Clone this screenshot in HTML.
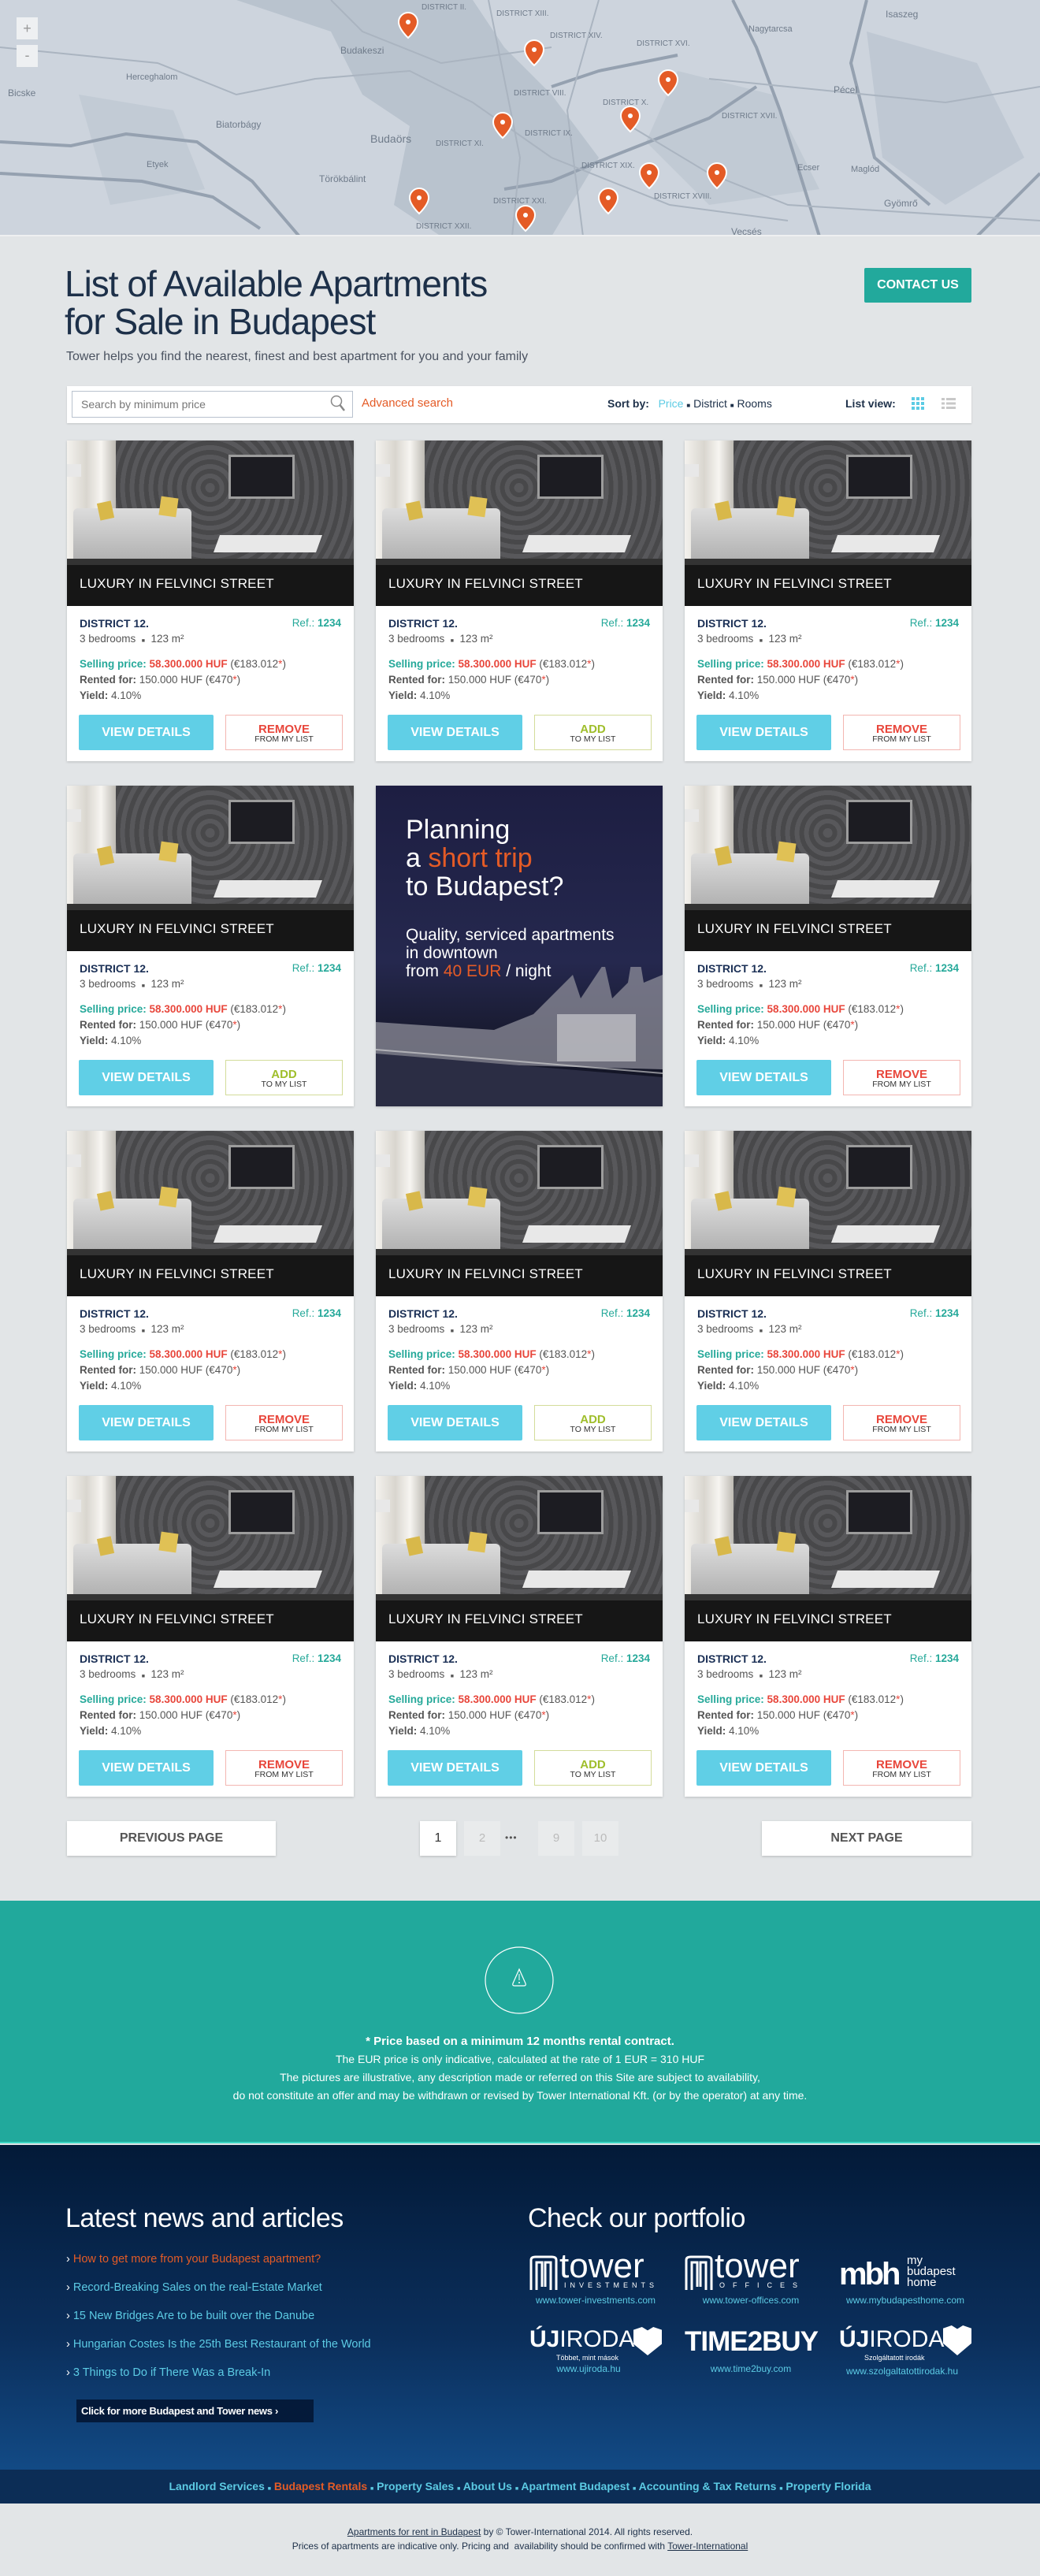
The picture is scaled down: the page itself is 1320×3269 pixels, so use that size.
<!DOCTYPE html>
<html><head><meta charset="utf-8">
<style>
*{margin:0;padding:0;box-sizing:border-box}
body{width:1320px;height:3269px;position:relative;background:#e2e5e7;font-family:"Liberation Sans",sans-serif;overflow:hidden}
.n{font-family:"Liberation Sans Narrow","Liberation Sans",sans-serif}
.abs{position:absolute}
.card{position:absolute;width:364px;height:407px;background:#fff;box-shadow:0 1px 3px rgba(0,0,0,.18)}
.img{position:absolute;left:0;top:0;width:364px;height:210px;overflow:hidden;background:#4a4a4d}
.img .wall{position:absolute;left:60px;top:0;width:304px;height:150px;background:repeating-radial-gradient(circle at 40% 40%,#58585b 0 6px,#48484a 6px 12px)}
.img .cur{position:absolute;left:0;top:0;width:62px;height:160px;background:linear-gradient(90deg,#f4f2ee,#d9d6cf 40%,#f7f5f1 70%,#bdbab3)}
.img .lamp{position:absolute;left:0;top:30px;width:18px;height:16px;background:#e8e8e8}
.img .tv{position:absolute;left:205px;top:18px;width:84px;height:56px;background:#1c1c22;border:3px solid #9c9c9c}
.img .sofa{position:absolute;left:8px;top:86px;width:150px;height:68px;background:linear-gradient(#dcdcdc,#b0b0b0);border-radius:6px 6px 0 0}
.img .pil1{position:absolute;left:40px;top:78px;width:18px;height:22px;background:#d8b84a;transform:rotate(-12deg)}
.img .pil2{position:absolute;left:118px;top:72px;width:22px;height:24px;background:#e0c155;transform:rotate(8deg)}
.img .table{position:absolute;left:190px;top:120px;width:130px;height:22px;background:#e8e8e8;transform:skewX(-20deg)}
.img .floor{position:absolute;left:0;top:150px;width:364px;height:60px;background:#333}
.img .bar{position:absolute;left:0;top:158px;width:364px;height:52px;background:rgba(10,10,10,.7)}
.img .t{position:absolute;left:16px;top:172px;color:#fff;font-size:17px;letter-spacing:.2px}
.bd{position:absolute;left:16px;top:222px;width:332px;font-size:13.5px;color:#555;line-height:20px}
.d{color:#1a2f55;font-weight:bold;font-size:14px}
.ref{position:absolute;right:0;top:0;color:#26a99a}
.sp{color:#26a99a;font-weight:bold}
.rd{color:#e8463b}
.btn1{position:absolute;left:15px;top:348px;width:171px;height:45px;background:#60cfe6;border-radius:2px;color:#fff;font-weight:bold;font-size:16px;text-align:center;line-height:45px}
.btn2{position:absolute;left:201px;top:348px;width:149px;height:45px;border:1px solid #f3b6b1;text-align:center;font-size:10.5px;color:#333;line-height:11px;padding-top:10px}
.btn2 b{display:block;color:#e8463b;font-size:15px;line-height:15px}
.btn2.add{border-color:#d3dc9a}
.btn2.add b{color:#9fbe2b}
.pg{position:absolute;top:2311px;height:44px;background:#fff;box-shadow:0 1px 3px rgba(0,0,0,.2);text-align:center;line-height:44px;font-size:16px;font-weight:bold;color:#555}
.pn{position:absolute;top:2311px;width:46px;height:44px;background:#e9ebec;text-align:center;line-height:44px;color:#bbb;font-size:15px}
</style></head><body>

<!-- MAP -->
<svg class="abs" style="left:0;top:0" width="1320" height="300" viewBox="0 0 1320 300">
<rect width="1320" height="300" fill="#cdd4dd"/>
<path d="M300 0 L420 40 L460 120 L520 160 L500 260 L560 300 L700 300 L760 200 L700 120 L640 60 L600 0Z" fill="#b9c3ce"/>
<path d="M1100 40 L1240 80 L1300 200 L1200 260 L1120 200Z" fill="#bfc8d3"/>
<path d="M100 120 L220 140 L260 240 L140 260Z" fill="#c2cbd5"/>
<path d="M860 90 L980 120 L1040 240 L900 260 L820 180Z" fill="#c1cad4"/>
<g fill="none" stroke="#95a1b0" stroke-width="4">
<path d="M0 180 L90 185 L160 170 L250 180 L320 230 L380 300"/>
<path d="M0 220 L180 230 L270 250 L330 290"/>
<path d="M640 240 L700 230 L760 205 L900 150 L960 110"/>
<path d="M700 110 L760 90 L860 70"/>
<path d="M930 0 L960 60 L990 140 L1040 300"/>
<path d="M1100 0 L1080 80 L1110 200 L1180 260"/>
<path d="M1240 300 L1300 240 L1320 220"/>
</g>
<g fill="none" stroke="#aab4c0" stroke-width="2">
<path d="M0 60 L200 80 L300 120 L400 100 L520 90 L600 130 L700 200 L850 260 L1000 280"/>
<path d="M620 0 L640 100 L660 200 L650 300"/>
<path d="M760 0 L720 140 L740 300"/>
<path d="M800 160 L900 220 L1000 260 L1320 280"/>
<path d="M900 100 L1200 130 L1320 110"/>
<path d="M420 0 L460 40 L560 80 L700 60"/>
</g>
<g font-family="Liberation Sans,sans-serif" font-size="10" fill="#6f7b8a">
<text x="535" y="12">DISTRICT II.</text><text x="630" y="20">DISTRICT XIII.</text><text x="698" y="48">DISTRICT XIV.</text><text x="808" y="58">DISTRICT XVI.</text><text x="652" y="121">DISTRICT VIII.</text><text x="765" y="133">DISTRICT X.</text><text x="666" y="172">DISTRICT IX.</text><text x="553" y="185">DISTRICT XI.</text><text x="738" y="213">DISTRICT XIX.</text><text x="916" y="150">DISTRICT XVII.</text><text x="830" y="252">DISTRICT XVIII.</text><text x="626" y="258">DISTRICT XXI.</text><text x="528" y="290">DISTRICT XXII.</text>
<text x="432" y="68" font-size="12">Budakeszi</text><text x="470" y="181" font-size="14">Budaörs</text><text x="10" y="122" font-size="12">Bicske</text><text x="274" y="162" font-size="12">Biatorbágy</text><text x="405" y="231" font-size="12">Törökbálint</text><text x="1058" y="118" font-size="12">Pécel</text><text x="1122" y="262" font-size="12">Gyömrő</text><text x="928" y="298" font-size="12">Vecsés</text><text x="1124" y="22" font-size="12">Isaszeg</text><text x="950" y="40" font-size="11">Nagytarcsa</text><text x="1012" y="216" font-size="11">Ecser</text><text x="1080" y="218" font-size="11">Maglód</text><text x="160" y="101" font-size="11">Herceghalom</text><text x="186" y="212" font-size="11">Etyek</text>
</g>
<g fill="#e45b26" stroke="#fff" stroke-width="2">
<path d="M518 16 a12 12 0 0 1 12 12 c0 9 -12 20 -12 20 c0 0 -12 -11 -12 -20 a12 12 0 0 1 12 -12z"/>
<path d="M678 51 a12 12 0 0 1 12 12 c0 9 -12 20 -12 20 c0 0 -12 -11 -12 -20 a12 12 0 0 1 12 -12z"/>
<path d="M848 89 a12 12 0 0 1 12 12 c0 9 -12 20 -12 20 c0 0 -12 -11 -12 -20 a12 12 0 0 1 12 -12z"/>
<path d="M638 143 a12 12 0 0 1 12 12 c0 9 -12 20 -12 20 c0 0 -12 -11 -12 -20 a12 12 0 0 1 12 -12z"/>
<path d="M800 135 a12 12 0 0 1 12 12 c0 9 -12 20 -12 20 c0 0 -12 -11 -12 -20 a12 12 0 0 1 12 -12z"/>
<path d="M824 207 a12 12 0 0 1 12 12 c0 9 -12 20 -12 20 c0 0 -12 -11 -12 -20 a12 12 0 0 1 12 -12z"/>
<path d="M910 207 a12 12 0 0 1 12 12 c0 9 -12 20 -12 20 c0 0 -12 -11 -12 -20 a12 12 0 0 1 12 -12z"/>
<path d="M772 239 a12 12 0 0 1 12 12 c0 9 -12 20 -12 20 c0 0 -12 -11 -12 -20 a12 12 0 0 1 12 -12z"/>
<path d="M532 239 a12 12 0 0 1 12 12 c0 9 -12 20 -12 20 c0 0 -12 -11 -12 -20 a12 12 0 0 1 12 -12z"/>
<path d="M667 261 a12 12 0 0 1 12 12 c0 9 -12 20 -12 20 c0 0 -12 -11 -12 -20 a12 12 0 0 1 12 -12z"/>
</g>
<g fill="#fff"><circle cx="518" cy="28" r="3"/><circle cx="678" cy="63" r="3"/><circle cx="848" cy="101" r="3"/><circle cx="638" cy="155" r="3"/><circle cx="800" cy="147" r="3"/><circle cx="824" cy="219" r="3"/><circle cx="910" cy="219" r="3"/><circle cx="772" cy="251" r="3"/><circle cx="532" cy="251" r="3"/><circle cx="667" cy="273" r="3"/></g>
<rect x="21" y="22" width="27" height="28" fill="#eef0f2"/><rect x="21" y="57" width="27" height="28" fill="#eef0f2"/>
<text x="34.5" y="42" text-anchor="middle" font-size="18" fill="#999" font-family="Liberation Sans">+</text>
<text x="34.5" y="76" text-anchor="middle" font-size="18" fill="#999" font-family="Liberation Sans">-</text>
<rect y="298" width="1320" height="2" fill="#eef0f1"/>
</svg>

<!-- HEADER -->
<div class="abs" style="left:82px;top:336px;font-size:46px;line-height:48px;color:#1d3049;letter-spacing:-1px">List of Available Apartments<br>for Sale in Budapest</div>
<div class="abs" style="left:84px;top:444px;font-size:16px;color:#4a5260">Tower helps you find the nearest, finest and best apartment for you and your family</div>
<div class="abs" style="left:1097px;top:340px;width:136px;height:44px;background:#22a99c;border-radius:2px;color:#fff;font-weight:bold;font-size:16px;text-align:center;line-height:44px">CONTACT US</div>

<!-- SEARCH BAR -->
<div class="abs" style="left:85px;top:490px;width:1148px;height:47px;background:#fff;box-shadow:0 1px 2px rgba(0,0,0,.15)"></div>
<div class="abs" style="left:91px;top:496px;width:357px;height:34px;border:1px solid #b9c2cf;font-size:14px;color:#777;line-height:32px;padding-left:11px">Search by minimum price</div>
<svg class="abs" style="left:418px;top:500px" width="22" height="24"><circle cx="9" cy="9" r="6.5" fill="none" stroke="#888" stroke-width="1.5"/><path d="M13.5 14 L19 21" stroke="#888" stroke-width="2.5"/></svg>
<div class="abs" style="left:459px;top:503px;font-size:15px;color:#e45b26">Advanced search</div>
<div class="abs" style="left:771px;top:504px;font-size:14px;color:#1d3049"><b>Sort by:</b>&nbsp;&nbsp;&nbsp;<span style="color:#5ccbe4">Price</span> <span style="font-size:8px">■</span> District <span style="font-size:8px">■</span> Rooms</div>
<div class="abs" style="left:1073px;top:504px;font-size:14px;color:#1d3049;font-weight:bold">List view:</div>
<svg class="abs" style="left:1157px;top:504px" width="60" height="18"><g fill="#5ccbe4"><rect x="0" y="0" width="4" height="4"/><rect x="6" y="0" width="4" height="4"/><rect x="12" y="0" width="4" height="4"/><rect x="0" y="6" width="4" height="4"/><rect x="6" y="6" width="4" height="4"/><rect x="12" y="6" width="4" height="4"/><rect x="0" y="12" width="4" height="4"/><rect x="6" y="12" width="4" height="4"/><rect x="12" y="12" width="4" height="4"/></g><g fill="#c8c8c8"><rect x="38" y="1" width="4" height="3"/><rect x="44" y="1" width="12" height="3"/><rect x="38" y="6.5" width="4" height="3"/><rect x="44" y="6.5" width="12" height="3"/><rect x="38" y="12" width="4" height="3"/><rect x="44" y="12" width="12" height="3"/></g></svg>

<!-- CARDS -->
<div id="cards"></div>
<script>
var pos=[85,477,869],tops=[559,997,1435,1873];
var types=[['r','a','r'],['a','p','r'],['r','a','r'],['r','a','r']];
var h='';
for(var r=0;r<4;r++)for(var c=0;c<3;c++){
var t=types[r][c],L=pos[c],T=tops[r];
if(t=='p'){
h+='<div class="card" style="left:'+L+'px;top:'+T+'px;height:407px;overflow:hidden;background:linear-gradient(#1d1e42 0%,#25284e 55%,#1a1c33 75%,#0f111e 100%)">'+
'<svg style="position:absolute;left:0;top:230px" width="364" height="177"><path d="M0 70 L150 80 L200 60 L220 40 L250 10 L260 40 L290 -5 L300 40 L320 20 L330 -40 L340 20 L364 10 L364 130 L0 120Z" fill="#8d8e9a" opacity=".75"/><path d="M0 110 L364 140 L364 177 L0 177Z" fill="#2b2d44"/><path d="M0 105 L364 135" stroke="#ddd" stroke-width="2" opacity=".6"/><g fill="#eee" opacity=".5"><rect x="230" y="60" width="100" height="60"/></g></svg>'+
'<div style="position:absolute;left:38px;top:38px;color:#fff;font-size:34px;line-height:36px">Planning<br>a <span style="color:#e45b26">short trip</span><br>to Budapest?</div>'+
'<div style="position:absolute;left:38px;top:178px;color:#fff;font-size:21px;line-height:23px">Quality, serviced apartments<br>in downtown<br>from <span style="color:#e45b26">40 EUR</span> / night</div></div>';
continue;}
h+='<div class="card" style="left:'+L+'px;top:'+T+'px"><div class="img"><div class="wall"></div><div class="cur"></div><div class="lamp"></div><div class="tv"></div><div class="sofa"></div><div class="pil1"></div><div class="pil2"></div><div class="table"></div><div class="floor"></div><div class="bar"></div><div class="t">LUXURY IN FELVINCI STREET</div></div>'+
'<div class="bd"><div class="d">DISTRICT 12.</div><div class="ref">Ref.: <b>1234</b></div><div>3 bedrooms &nbsp;<span style="font-size:7px">■</span>&nbsp; 123 m²</div>'+
'<div style="margin-top:9px"><span class="sp">Selling price:</span> <b class="rd">58.300.000 HUF</b> (€183.012<span class="rd">*</span>)</div>'+
'<div><b>Rented for:</b> 150.000 HUF (€470<span class="rd">*</span>)</div><div><b>Yield:</b> 4.10%</div></div>'+
'<div class="btn1">VIEW DETAILS</div>'+
(t=='a'?'<div class="btn2 add"><b>ADD</b>TO MY LIST</div>':'<div class="btn2"><b>REMOVE</b>FROM MY LIST</div>')+'</div>';
}
document.getElementById('cards').innerHTML=h;
</script>

<!-- PAGINATION -->
<div class="pg" style="left:85px;width:265px">PREVIOUS PAGE</div>
<div class="pg" style="left:533px;width:46px;color:#333;font-weight:normal">1</div>
<div class="pn" style="left:589px">2</div>
<div class="abs" style="left:641px;top:2325px;font-size:12px;color:#555;letter-spacing:1px">•••</div>
<div class="pn" style="left:683px">9</div>
<div class="pn" style="left:739px">10</div>
<div class="pg" style="left:967px;width:266px">NEXT PAGE</div>

<!-- TEAL -->
<div class="abs" style="left:0;top:2412px;width:1320px;height:308px;background:#21a99c;border-bottom:2px solid #3fd8c6"></div>
<svg class="abs" style="left:614px;top:2469px" width="90" height="88"><ellipse cx="45" cy="44" rx="43" ry="42" fill="none" stroke="#fff" stroke-width="1.2"/><path d="M45 30 L37 48 Q36 51 39 51 L51 51 Q54 51 53 48Z" fill="none" stroke="#fff" stroke-width="1.2"/><path d="M45 36 L45 44" stroke="#fff"/><circle cx="45" cy="47" r="1" fill="#fff"/></svg>
<div class="abs" style="left:0;top:2579px;width:1320px;text-align:center;color:#fff;font-size:14px;line-height:23px">
<div style="font-weight:bold;font-size:15px">* Price based on a minimum 12 months rental contract.</div>
<div>The EUR price is only indicative, calculated at the rate of 1 EUR = 310 HUF</div>
<div>The pictures are illustrative, any description made or referred on this Site are subject to availability,</div>
<div>do not constitute an offer and may be withdrawn or revised by Tower International Kft. (or by the operator) at any time.</div></div>

<!-- DARK FOOTER -->
<div class="abs" style="left:0;top:2722px;width:1320px;height:412px;background:linear-gradient(#031a38,#0b2f5c 60%,#124a85)"></div>
<div class="abs" style="left:83px;top:2796px;font-size:34px;color:#fff;letter-spacing:-.5px">Latest news and articles</div>
<div class="abs" style="left:670px;top:2796px;font-size:34px;color:#fff;letter-spacing:-.5px">Check our portfolio</div>
<div class="abs" style="left:84px;top:2849px;font-size:14.5px;line-height:36px;color:#5ccbe4">
<div><span style="color:#fff">›</span> <span style="color:#e45b26">How to get more from your Budapest apartment?</span></div>
<div><span style="color:#fff">›</span> Record-Breaking Sales on the real-Estate Market</div>
<div><span style="color:#fff">›</span> 15 New Bridges Are to be built over the Danube</div>
<div><span style="color:#fff">›</span> Hungarian Costes Is the 25th Best Restaurant of the World</div>
<div><span style="color:#fff">›</span> 3 Things to Do if There Was a Break-In</div></div>
<div class="abs" style="left:97px;top:3045px;width:301px;height:29px;background:#041a3a;color:#fff;font-size:13px;font-weight:bold;line-height:29px;padding-left:6px;white-space:nowrap;letter-spacing:-.3px">Click for more Budapest and Tower news ›</div>

<!-- logos -->
<div class="abs" style="left:672px;top:2862px;width:168px;height:45px;color:#fff">
<svg class="abs" style="left:0;top:0" width="36" height="45"><path d="M2 44 V6 Q2 2 8 2 H28 Q34 2 34 6 V44 M9 44 V9 H16 V40 M20 40 V9 H27 V44" fill="none" stroke="#fff" stroke-width="3"/></svg>
<div class="abs" style="left:38px;top:-8px;font-size:44px;line-height:44px">tower</div>
<div class="abs" style="left:44px;top:33px;font-size:9px;letter-spacing:5px">INVESTMENTS</div></div>
<div class="abs" style="left:869px;top:2862px;width:168px;height:45px;color:#fff">
<svg class="abs" style="left:0;top:0" width="36" height="45"><path d="M2 44 V6 Q2 2 8 2 H28 Q34 2 34 6 V44 M9 44 V9 H16 V40 M20 40 V9 H27 V44" fill="none" stroke="#fff" stroke-width="3"/></svg>
<div class="abs" style="left:38px;top:-8px;font-size:44px;line-height:44px">tower</div>
<div class="abs" style="left:44px;top:33px;font-size:9px;letter-spacing:10px">OFFICES</div></div>
<div class="abs" style="left:1065px;top:2860px;color:#fff">
<div class="abs" style="left:0;top:4px;font-size:40px;font-weight:bold;letter-spacing:-3px;line-height:44px">mbh</div>
<div class="abs" style="left:86px;top:2px;font-size:15px;line-height:14px">my<br>budapest<br>home</div></div>
<div class="abs" style="left:672px;top:2953px;color:#fff;width:168px">
<div class="abs" style="left:0;top:0;font-size:30px;line-height:32px"><b>ÚJ</b>IRODA</div>
<div class="abs" style="left:132px;top:0;width:36px;height:36px;background:#fff;clip-path:polygon(0 10%,30% 0,50% 12%,70% 0,100% 10%,100% 60%,50% 100%,0 60%)"></div>
<div class="abs" style="left:34px;top:34px;font-size:9px;white-space:nowrap">Többet, mint mások</div></div>
<div class="abs" style="left:869px;top:2952px;color:#fff;font-size:35px;font-weight:bold;line-height:40px;letter-spacing:-1px">TIME2BUY</div>
<div class="abs" style="left:1065px;top:2953px;color:#fff;width:168px">
<div class="abs" style="left:0;top:0;font-size:30px;line-height:32px"><b>ÚJ</b>IRODA</div>
<div class="abs" style="left:132px;top:-2px;width:36px;height:38px;background:#fff;clip-path:polygon(0 10%,30% 0,50% 12%,70% 0,100% 10%,100% 60%,50% 100%,0 60%)"></div>
<div class="abs" style="left:32px;top:34px;font-size:9px;white-space:nowrap">Szolgáltatott irodák</div></div>
<div class="abs" style="font-size:12px;color:#5ccbe4;top:2912px;left:672px;width:168px;text-align:center">www.tower-investments.com</div>
<div class="abs" style="font-size:12px;color:#5ccbe4;top:2912px;left:869px;width:168px;text-align:center">www.tower-offices.com</div>
<div class="abs" style="font-size:12px;color:#5ccbe4;top:2912px;left:1065px;width:168px;text-align:center">www.mybudapesthome.com</div>
<div class="abs" style="font-size:12px;color:#5ccbe4;top:2999px;left:672px;width:150px;text-align:center">www.ujiroda.hu</div>
<div class="abs" style="font-size:12px;color:#5ccbe4;top:2999px;left:869px;width:168px;text-align:center">www.time2buy.com</div>
<div class="abs" style="font-size:12px;color:#5ccbe4;top:3002px;left:1065px;width:160px;text-align:center">www.szolgaltatottirodak.hu</div>

<!-- NAV -->
<div class="abs" style="left:0;top:3134px;width:1320px;height:43px;background:#0c2d56;text-align:center;line-height:43px;font-size:14px;font-weight:bold;color:#5ccbe4">Landlord Services <span style="font-size:7px">■</span> <span style="color:#e45b26">Budapest Rentals</span> <span style="font-size:7px">■</span> Property Sales <span style="font-size:7px">■</span> About Us <span style="font-size:7px">■</span> Apartment Budapest <span style="font-size:7px">■</span> Accounting &amp; Tax Returns <span style="font-size:7px">■</span> Property Florida</div>
<div class="abs" style="left:0;top:3204px;width:1320px;text-align:center;font-size:12px;line-height:18px;color:#1d3049">
<div><u>Apartments for rent in Budapest</u> by © Tower-International 2014. All rights reserved.</div>
<div>Prices of apartments are indicative only. Pricing and &nbsp;availability should be confirmed with <u>Tower-International</u></div></div>
</body></html>
